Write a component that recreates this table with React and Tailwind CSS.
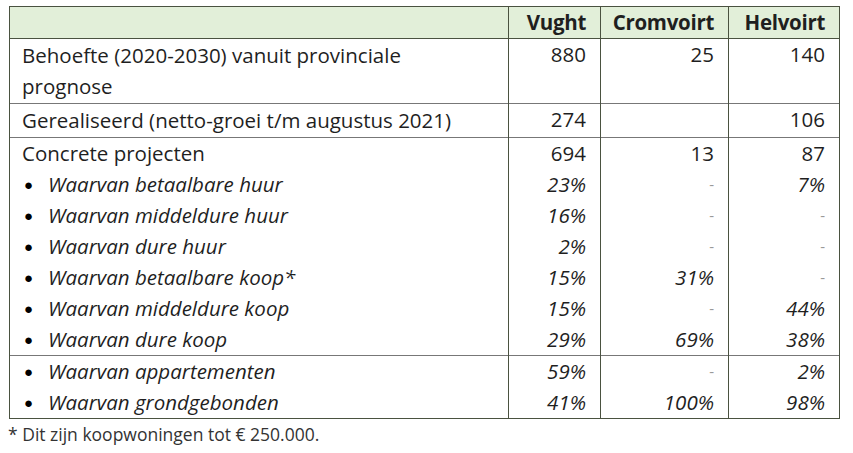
const rows = [
  { label: 'Behoefte (2020-2030) vanuit provinciale prognose', v: '880', c: '25', h: '140' },
  { label: 'Gerealiseerd (netto-groei t/m augustus 2021)', v: '274', c: '', h: '106' },
]

const projecten = [
  { label: 'Waarvan betaalbare huur', v: '23%', c: '-', h: '7%' },
  { label: 'Waarvan middeldure huur', v: '16%', c: '-', h: '-' },
  { label: 'Waarvan dure huur', v: '2%', c: '-', h: '-' },
  { label: 'Waarvan betaalbare koop*', v: '15%', c: '31%', h: '-' },
  { label: 'Waarvan middeldure koop', v: '15%', c: '-', h: '44%' },
  { label: 'Waarvan dure koop', v: '29%', c: '69%', h: '38%' },
]

const woningtype = [
  { label: 'Waarvan appartementen', v: '59%', c: '-', h: '2%' },
  { label: 'Waarvan grondgebonden', v: '41%', c: '100%', h: '98%' },
]

function Bullet({ label }) {
  return (
    <div className="flex items-center">
      <span className="w-[26px] pl-[2px] text-[15px] leading-[31px] text-black">●</span>
      <span className="italic">{label}</span>
    </div>
  )
}

function Num({ value, italic }) {
  if (value === '-') return <div className="text-[#999] text-[15px] leading-[31px]">-</div>
  return <div className={italic ? 'italic' : ''}>{value}</div>
}

export default function App() {
  const cell = 'border-x border-[#4a5240] align-top px-0'
  const numCell = cell + ' text-right pr-[14px]'
  return (
    <div className="w-[853px] h-[453px] bg-white pt-[6px] pl-[9px] text-[#1f1f1f] font-['Open_Sans',sans-serif]">
      <table className="table-fixed w-[830px] border-collapse text-[20.5px] leading-[31px] border border-[#4a5240]">
        <colgroup>
          <col className="w-[499px]" />
          <col className="w-[92px]" />
          <col className="w-[128px]" />
          <col className="w-[111px]" />
        </colgroup>
        <thead>
          <tr className="bg-[#e2efd9] h-[31px] border-b border-[#4a5240]">
            <th className={cell}></th>
            <th className={numCell + ' font-bold tracking-[-0.3px]'}>Vught</th>
            <th className={numCell + ' font-bold tracking-[-0.3px]'}>Cromvoirt</th>
            <th className={numCell + ' font-bold tracking-[-0.3px]'}>Helvoirt</th>
          </tr>
        </thead>
        <tbody>
          {rows.map((r) => (
            <tr key={r.label} className="border-b border-[#777]">
              <td className={cell + ' pl-[12px] pr-[30px] py-[1px]'}>{r.label}</td>
              <td className={numCell}>{r.v}</td>
              <td className={numCell}>{r.c}</td>
              <td className={numCell}>{r.h}</td>
            </tr>
          ))}
          <tr className="border-b border-[#777]">
            <td className={cell + ' pl-[12px]'}>
              <div>Concrete projecten</div>
              {projecten.map((p) => <Bullet key={p.label} label={p.label} />)}
            </td>
            <td className={numCell}>
              <div>694</div>
              {projecten.map((p) => <Num key={p.label} value={p.v} italic />)}
            </td>
            <td className={numCell}>
              <div>13</div>
              {projecten.map((p) => <Num key={p.label} value={p.c} italic />)}
            </td>
            <td className={numCell}>
              <div>87</div>
              {projecten.map((p) => <Num key={p.label} value={p.h} italic />)}
            </td>
          </tr>
          <tr>
            <td className={cell + ' pl-[12px]'}>
              {woningtype.map((p) => <Bullet key={p.label} label={p.label} />)}
            </td>
            <td className={numCell}>
              {woningtype.map((p) => <Num key={p.label} value={p.v} italic />)}
            </td>
            <td className={numCell}>
              {woningtype.map((p) => <Num key={p.label} value={p.c} italic />)}
            </td>
            <td className={numCell}>
              {woningtype.map((p) => <Num key={p.label} value={p.h} italic />)}
            </td>
          </tr>
        </tbody>
      </table>
      <div className="text-[17.5px] leading-[30px] text-[#333] -ml-[1px]">* Dit zijn koopwoningen tot € 250.000.</div>
    </div>
  )
}
